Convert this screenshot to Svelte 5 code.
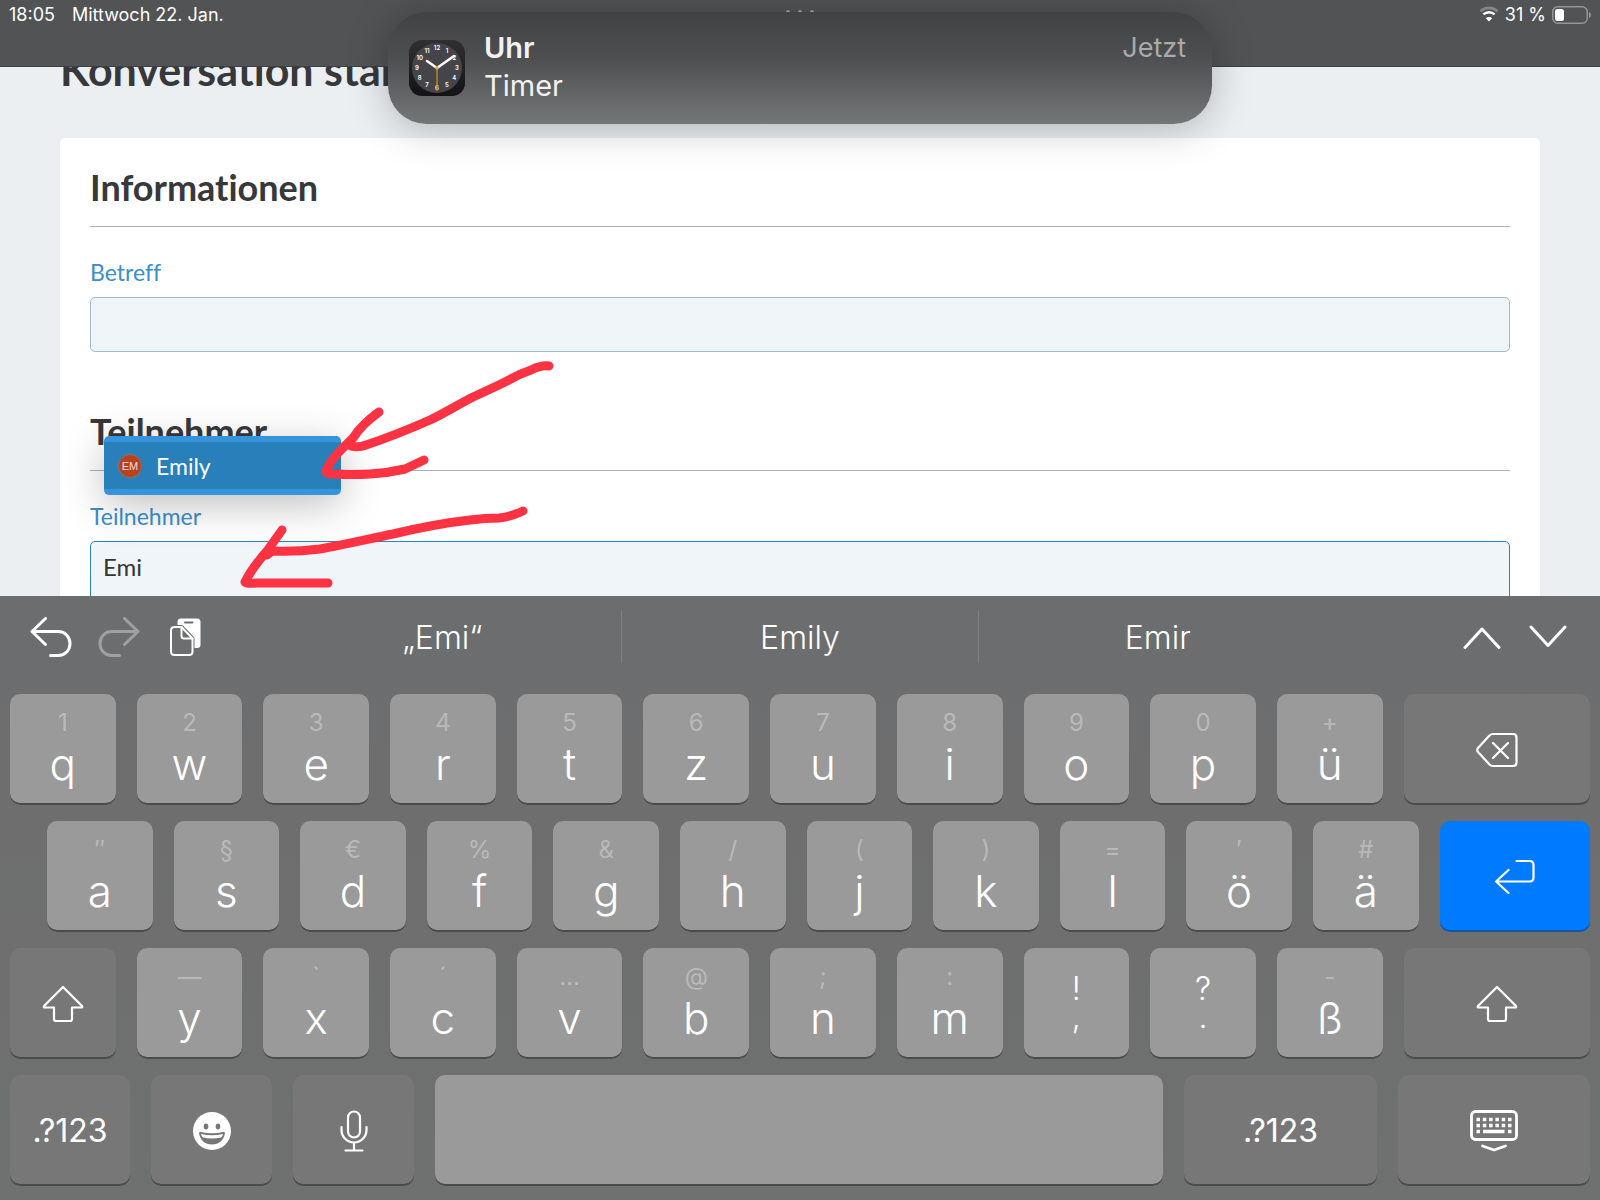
<script>
  let subject = '';
  let member = 'Emi';

  const matches = [{ name: 'Emily', initials: 'EM' }];
  const suggestions = ['„Emi“', 'Emily', 'Emir'];
  const numerals = [12, 1, 2, 3, 4, 5, 6, 7, 8, 9, 10, 11];

  const letters = (chars, hints) =>
    chars.split('').map((label, i) => ({ label, hint: hints[i], size: 106 }));

  const rows = [
    [
      ...letters('qwertzuiopü', '1234567890+'),
      { icon: 'delete', title: 'Löschen', size: 187 }
    ],
    [
      ...letters('asdfghjklöä', '″§€%&/()=′#'),
      { icon: 'return', title: 'Return', size: 151, kind: 'primary' }
    ],
    [
      { icon: 'shift', title: 'Umschalt', size: 106 },
      ...letters('yxcvbnm', '—`´…@;:'),
      { label: ',', hint: '!', size: 106, kind: 'punct' },
      { label: '.', hint: '?', size: 106, kind: 'punct' },
      ...letters('ß', '-'),
      { icon: 'shift', title: 'Umschalt', size: 187 }
    ],
    [
      { text: '.?123', size: 120 },
      { icon: 'emoji', title: 'Emoji', size: 121 },
      { icon: 'mic', title: 'Diktat', size: 121 },
      { title: 'Leerzeichen', size: 728, kind: 'space' },
      { text: '.?123', size: 193 },
      { icon: 'hide', title: 'Tastatur ausblenden', size: 192 }
    ]
  ];

  function numeralPos(n) {
    const a = (n * Math.PI) / 6;
    return { x: 28 + 20 * Math.sin(a), y: 28 - 20 * Math.cos(a) };
  }

  function press(key) {
    if (key.label) member += key.label;
    else if (key.kind === 'space') member += ' ';
    else if (key.icon === 'delete') member = member.slice(0, -1);
  }
</script>

<div class="screen">
  <main class="page">
    <h1>Konversation starten</h1>
    <form class="card" on:submit|preventDefault>
      <h2>Informationen</h2>
      <div class="field">
        <label for="subject">Betreff</label>
        <input id="subject" type="text" bind:value={subject} />
      </div>
      <h2>Teilnehmer</h2>
      <div class="field">
        <label for="member">Teilnehmer</label>
        <input id="member" class="focused" type="text" autocomplete="off" bind:value={member} />
        <ul class="matches">
          {#each matches as { name, initials }}
            <li>
              <button type="button" class="match" on:click={() => (member = name)}>
                <span class="avatar">{initials}</span>
                {name}
              </button>
            </li>
          {/each}
        </ul>
      </div>
    </form>
    <svg class="marks" width="560" height="596" viewBox="0 0 560 596">
      <path d="M549 366Q541 365 531 370Q519 374 507 381C495 387 484 392 473 397C459 404 445 413 430 420Q396 435 366 445Q358 448 351 446" />
      <path d="M379 412Q362 424 353 438C343 448 331 458 326 471Q325 474 334 474Q352 475 370 474Q388 473 405 469L424 460" />
      <path d="M523 511Q510 517 499 518Q485 518 470 520C443 523 418 528 393 534C368 539 344 545 320 549Q296 552 272 551L267 555" />
      <path d="M282 530L267 551Q252 568 245 582Q247 584 256 583L328 583" />
    </svg>
  </main>

  <header class="status">
    <span>18:05</span>
    <span class="date">Mittwoch 22. Jan.</span>
    <svg class="handle" width="30" height="4" viewBox="0 0 30 4">
      <circle cx="3" cy="2" r="2" />
      <circle cx="15" cy="2" r="2" />
      <circle cx="27" cy="2" r="2" />
    </svg>
    <svg class="wifi" width="20" height="16" viewBox="0 0 20 16">
      <path class="weak" d="M1.5 5.2a12.4 12.4 0 0 1 17 0" />
      <path d="M4.4 8.4a8.2 8.2 0 0 1 11.2 0" />
      <path class="dot" d="M10 15.5L6.8 12.2a4.6 4.6 0 0 1 6.4 0z" />
    </svg>
    <span class="percent">31 %</span>
    <svg width="40" height="18" viewBox="0 0 40 18">
      <rect x="0.75" y="0.75" width="34.5" height="16.5" rx="5" fill="none" stroke="#949596" stroke-width="1.5" />
      <path d="M37 6a3.2 3.2 0 0 1 0 6z" fill="#949596" />
      <rect x="3" y="3" width="9" height="12" rx="2.5" fill="#fff" />
    </svg>
  </header>

  <section class="banner">
    <svg class="clock" width="56" height="56" viewBox="0 0 56 56">
      <defs>
        <linearGradient id="clock-bg" x1="0" y1="0" x2="0" y2="1">
          <stop offset="0" stop-color="#303032" />
          <stop offset="1" stop-color="#131315" />
        </linearGradient>
      </defs>
      <rect width="56" height="56" rx="13" fill="url(#clock-bg)" />
      <circle cx="28" cy="28" r="25" fill="#454549" />
      {#each numerals as n}
        <text x={numeralPos(n).x} y={numeralPos(n).y + 2}>{n}</text>
      {/each}
      <path d="M28 28L18 21M28 28L45 16" stroke="#fff" stroke-width="2.6" stroke-linecap="round" />
      <path d="M28 26V51" stroke="#c98b2b" stroke-width="1.3" />
      <circle cx="28" cy="28" r="1.8" fill="#e0a458" />
    </svg>
    <div class="message">
      <strong>Uhr</strong>
      <span>Timer</span>
    </div>
    <time>Jetzt</time>
  </section>

  <section class="keyboard">
    <div class="toolbar">
      <div class="tools">
        <button type="button" aria-label="Widerrufen">
          <svg width="42" height="42" viewBox="0 0 42 42">
            <path d="M15.5 2.5L2 15.5L15.5 28.5M2 15.5H28.5A11.5 12 0 0 1 28.5 39.5H20.5" />
          </svg>
        </button>
        <button type="button" class="off" aria-label="Wiederholen">
          <svg width="42" height="42" viewBox="0 0 42 42">
            <path d="M26.5 2.5L40 15.5L26.5 28.5M40 15.5H13.5A11.5 12 0 0 0 13.5 39.5H21.5" />
          </svg>
        </button>
        <button type="button" aria-label="Einsetzen">
          <svg width="36" height="38" viewBox="-4 0 36 38">
            <path class="solid" d="M11 0.5H27Q30.5 0.5 30.5 4V26.5Q30.5 30 27 30H11Q7.5 30 7.5 26.5V4Q7.5 0.5 11 0.5Z" />
            <path class="thin slot" d="M15 4.5H22.5" />
            <path class="halo" d="M4.5 9H11.5L22.5 20.5V33.5Q22.5 37 19 37H4.5Q1 37 1 33.5V12.5Q1 9 4.5 9Z" />
            <path class="thin" d="M4.5 9H11.5L22.5 20.5V33.5Q22.5 37 19 37H4.5Q1 37 1 33.5V12.5Q1 9 4.5 9Z" />
            <path class="thin" d="M11.5 9V18Q11.5 20.5 14 20.5H22.5" />
          </svg>
        </button>
      </div>
      <div class="suggestions">
        {#each suggestions as word}
          <button type="button">{word}</button>
        {/each}
      </div>
      <div class="arrows">
        <button type="button" aria-label="Vorheriges Feld">
          <svg width="38" height="26" viewBox="0 0 38 26"><path d="M2 23.5L19 5L36 23.5" /></svg>
        </button>
        <button type="button" aria-label="Nächstes Feld">
          <svg width="38" height="26" viewBox="0 0 38 26"><path d="M2 3L19 21.5L36 3" /></svg>
        </button>
      </div>
    </div>

    {#each rows as row, i}
      <div class="row" class:indent={i === 1}>
        {#each row as key}
          <button
            type="button"
            class="key {key.kind || ''}"
            class:special={key.icon || key.text}
            style="flex-grow:{key.size}"
            aria-label={key.title}
            on:click={() => press(key)}>
            {#if key.label}
              <span class="hint">{key.hint}</span>
              <span class="char">{key.label}</span>
            {:else if key.text}
              {key.text}
            {:else if key.icon === 'delete'}
              <svg width="42" height="36" viewBox="0 0 42 36">
                <path d="M17 2H37Q40.5 2 40.5 5.5V30.5Q40.5 34 37 34H17Q15 34 13.5 32.5L2 20Q0.5 18 2 16L13.5 3.5Q15 2 17 2ZM17 11L32 26M32 11L17 26" />
              </svg>
            {:else if key.icon === 'return'}
              <svg width="42" height="36" viewBox="0 0 42 36">
                <path d="M22.5 2H35.5Q39.5 2 39.5 6V18.5Q39.5 22.5 35.5 22.5H2M14.5 11L2 22.5L14.5 34" />
              </svg>
            {:else if key.icon === 'shift'}
              <svg width="42" height="38" viewBox="0 0 42 38">
                <path d="M21 2L40 21Q41 22.5 39 22.5H30V34Q30 36 28 36H14Q12 36 12 34V22.5H3Q1 22.5 2 21Z" />
              </svg>
            {:else if key.icon === 'emoji'}
              <svg width="40" height="40" viewBox="0 0 40 40">
                <circle class="solid" cx="20" cy="20" r="19" />
                <ellipse class="cut" cx="14" cy="15.5" rx="2.3" ry="2.9" />
                <ellipse class="cut" cx="26" cy="15.5" rx="2.3" ry="2.9" />
                <path class="cut" d="M7 22Q7 20.5 9 21Q20 23.5 31 21Q33 20.5 33 22C32 29 27 33.5 20 33.5S8 29 7 22Z" />
                <path class="solid" d="M9 23Q20 25.5 31 23Q30.5 25.5 29 26.5Q20 28.5 11 26.5Q9.5 25.5 9 23Z" />
              </svg>
            {:else if key.icon === 'mic'}
              <svg width="30" height="42" viewBox="0 0 30 42">
                <rect x="9" y="1.5" width="12" height="26" rx="6" />
                <path d="M2.5 17V20A12.5 12.5 0 0 0 27.5 20V17M15 32.5V40M6.5 40.5H23.5" />
              </svg>
            {:else if key.icon === 'hide'}
              <svg class="bold" width="50" height="44" viewBox="0 0 50 44">
                <rect x="2.5" y="2.5" width="45" height="28" rx="4" />
                <path class="dots" d="M7.5 10.5H43M7.5 16.5H43" />
                <path class="flat" d="M7.5 22.5H11M14 22.5H35.5M39 22.5H42.5" />
                <path d="M13.5 37L25 41L36.5 37" />
              </svg>
            {/if}
          </button>
        {/each}
      </div>
    {/each}
  </section>
</div>

<style>
  :global(body) {
    margin: 0;
    background: #ebeff1;
  }

  .screen {
    position: relative;
    display: flex;
    flex-direction: column;
    height: 100vh;
    overflow: hidden;
    font-family: Inter, 'Liberation Sans', sans-serif;
  }

  button {
    border: 0;
    padding: 0;
    margin: 0;
    background: none;
    color: inherit;
    font: inherit;
    cursor: pointer;
  }

  /* page */
  .page {
    position: relative;
    flex: 1 1 0;
    min-height: 0;
    overflow: hidden;
    padding: 42px 60px 0;
    background: #ebeff1;
    color: #37383c;
    font-family: Lato, 'Open Sans', sans-serif;
    font-variant-ligatures: none;
  }

  h1 {
    margin: 0 0 40px;
    font-size: 43px;
    line-height: 56px;
    font-weight: 700;
  }

  .card {
    padding: 25px 30px 60px;
    border-radius: 5px;
    background: #fff;
  }

  h2 {
    margin: 0 0 30px;
    padding-bottom: 15px;
    border-bottom: 1px solid #adb0b4;
    font-size: 36px;
    line-height: 48px;
    font-weight: 700;
  }

  .field {
    position: relative;
    margin-bottom: 55px;
  }

  label {
    display: block;
    margin-bottom: 10px;
    color: #3a8fca;
    font-size: 23px;
    line-height: 30px;
  }

  input {
    display: block;
    box-sizing: border-box;
    width: 100%;
    height: 55px;
    padding: 0 12px;
    border: 1px solid #a3bad0;
    border-radius: 5px;
    background: #f0f5fa;
    color: #333438;
    font: inherit;
    font-size: 24px;
    outline: none;
  }

  input.focused {
    height: 60px;
    padding-bottom: 10px;
    border-color: #2a86c2;
  }

  .matches {
    position: absolute;
    left: 14px;
    bottom: 106px;
    width: 237px;
    box-sizing: border-box;
    margin: 0;
    padding: 6px 0;
    list-style: none;
    border-radius: 5px;
    background: #3594db;
    box-shadow: 0 10px 40px rgba(0, 0, 0, 0.25);
  }

  .match {
    display: flex;
    align-items: center;
    gap: 14px;
    width: 100%;
    height: 47px;
    padding: 0 14px;
    background: #287fb9;
    color: #fff;
    font-size: 23px;
  }

  .avatar {
    width: 22px;
    height: 22px;
    border: 1px solid #9c6b5c;
    border-radius: 50%;
    background: #b8421f;
    color: #f6dcd4;
    font: 11px/22px 'Liberation Sans', sans-serif;
    text-align: center;
  }

  .marks {
    position: absolute;
    left: 0;
    top: 0;
    pointer-events: none;
  }

  .marks path {
    fill: none;
    stroke: #fd3344;
    stroke-width: 9;
    stroke-linecap: round;
    stroke-linejoin: round;
  }

  /* status bar and banner */
  .status {
    position: absolute;
    top: 0;
    left: 0;
    right: 0;
    box-sizing: border-box;
    display: flex;
    align-items: flex-start;
    height: 67px;
    padding: 6px 8px 0 9px;
    border-bottom: 1px solid #3f4041;
    background: #525355;
    color: #fff;
    font-size: 18px;
    line-height: 18px;
  }

  .date {
    margin-left: 17px;
  }

  .handle {
    position: absolute;
    top: 10px;
    left: 50%;
    transform: translateX(-50%);
    fill: #a0a1a2;
  }

  .wifi {
    margin-left: auto;
  }

  .wifi path {
    fill: none;
    stroke: #fff;
    stroke-width: 2.6;
  }

  .wifi .weak {
    stroke: #858687;
  }

  .wifi .dot {
    fill: #fff;
    stroke: none;
  }

  .percent {
    margin: 0 6px;
  }

  .banner {
    position: absolute;
    top: 12px;
    left: 50%;
    box-sizing: border-box;
    display: flex;
    width: 824px;
    max-width: 90%;
    height: 112px;
    padding: 17px 26px 0 21px;
    transform: translateX(-50%);
    border-radius: 38px;
    background: linear-gradient(#414244, #4c4e4f 40%, #747777);
    box-shadow: 0 4px 40px rgba(0, 0, 0, 0.25);
    color: #f2f2f3;
    font-size: 29px;
    line-height: 38px;
  }

  .clock {
    margin: 11px 19px 0 0;
  }

  .clock text {
    fill: #fff;
    font-size: 6px;
    font-weight: 600;
    text-anchor: middle;
  }

  .clock path {
    fill: none;
  }

  .message {
    display: flex;
    flex-direction: column;
    flex: 1;
  }

  .message strong {
    font-weight: 600;
  }

  time {
    color: #a9aaab;
    font-size: 27px;
  }

  /* keyboard */
  .keyboard {
    position: relative;
    display: flex;
    flex-direction: column;
    gap: 16px;
    padding: 0 10px 14px;
    background: linear-gradient(#6b6d6e, #6e6e6f 30%, #6f7070);
    color: #fff;
  }

  .keyboard svg {
    display: block;
    fill: none;
    stroke: #fff;
    stroke-width: 2.2;
    stroke-linecap: round;
    stroke-linejoin: round;
  }

  .toolbar {
    display: grid;
    grid-template-columns: 234px 1fr 234px;
    align-items: center;
    height: 82px;
    padding: 0 20px;
  }

  .tools,
  .arrows {
    display: flex;
    align-items: center;
    gap: 26px;
  }

  .arrows {
    gap: 28px;
    justify-content: flex-end;
    padding-right: 3px;
  }

  .toolbar svg {
    stroke-width: 3;
  }

  .toolbar .thin {
    stroke-width: 2;
  }

  .toolbar .halo {
    fill: #6c6e6f;
    stroke: #6c6e6f;
    stroke-width: 4;
  }

  .toolbar .slot {
    stroke: #6c6e6f;
  }

  .keyboard .solid {
    fill: #fff;
    stroke: none;
  }

  .keyboard .cut {
    fill: #777778;
    stroke: none;
  }

  .off {
    opacity: 0.35;
  }

  .suggestions {
    display: flex;
  }

  .suggestions button {
    flex: 1;
    height: 52px;
    font-size: 32px;
    font-weight: 350;
  }

  .suggestions button + button {
    border-left: 1px solid #808081;
  }

  .row {
    display: flex;
    gap: 21px;
  }

  .row.indent {
    padding-left: 37px;
  }

  .key {
    display: flex;
    flex: 1 1 0;
    flex-direction: column;
    align-items: center;
    min-width: 0;
    height: 111px;
    border-radius: 10px;
    background: #9a9a9b;
    box-shadow: inset 0 -2px 0 #4b4b4c;
  }

  .key.special,
  .key.primary {
    justify-content: center;
    background: #777778;
    font-size: 32px;
  }

  .key.primary {
    background: #007aff;
    box-shadow: inset 0 -2px 0 #1757a0;
  }

  .hint {
    margin-top: 12px;
    color: #b9b9ba;
    font-size: 24px;
    line-height: 33px;
  }

  .char {
    font-size: 44px;
    line-height: 50px;
    font-weight: 350;
  }

  .punct .hint {
    margin-top: 21px;
    color: #fff;
    font-size: 32px;
    line-height: 40px;
    font-weight: 350;
  }

  .punct .char {
    font-size: 32px;
    line-height: 16px;
  }

  .keyboard .bold {
    stroke-width: 2.8;
  }

  .keyboard .dots {
    stroke-width: 3.6;
    stroke-linecap: butt;
    stroke-dasharray: 3.5 2.8;
  }

  .keyboard .flat {
    stroke-width: 3.6;
    stroke-linecap: butt;
  }
</style>
